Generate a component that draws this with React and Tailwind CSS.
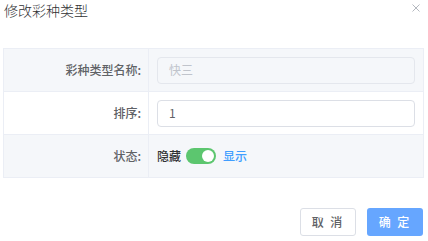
export default function App() {
  const font = { fontFamily: '"Helvetica Neue", "Noto Sans CJK SC", "Liberation Sans", sans-serif' };
  return (
    <div className="w-[428px] h-[241px] bg-white relative overflow-hidden" style={font}>
      <div className="flex items-start justify-between pl-[4px] pr-[8px] pt-[0px] h-[48px]">
        <div className="text-[14px] leading-[20px] text-[#303133] font-light">修改彩种类型</div>
        <svg className="mt-[4px]" width="8" height="8" viewBox="0 0 8 8">
          <path d="M0.5 0.5 L7.5 7.5 M7.5 0.5 L0.5 7.5" stroke="#b4b8bf" strokeWidth="1" />
        </svg>
      </div>
      <div className="mx-[3px] w-[421px] border border-[#ebeef5] text-[12px]">
        <div className="flex h-[43px] bg-[#f5f7fa] border-b border-[#ebeef5]">
          <div className="w-[145px] border-r border-[#ebeef5] flex items-center justify-end pr-[7px] text-[#606266] font-medium">彩种类型名称:</div>
          <div className="flex-1 flex items-center pl-[8px] pr-[8px]">
            <div className="w-full h-[27px] rounded-[4px] border border-[#e4e7ed] bg-[#f5f7fa] flex items-center pl-[11px] text-[#c0c4cc]">快三</div>
          </div>
        </div>
        <div className="flex h-[43px] bg-white border-b border-[#ebeef5]">
          <div className="w-[145px] border-r border-[#ebeef5] flex items-center justify-end pr-[7px] text-[#606266] font-medium">排序:</div>
          <div className="flex-1 flex items-center pl-[8px] pr-[8px]">
            <div className="w-full h-[27px] rounded-[4px] border border-[#dcdfe6] bg-white flex items-center pl-[11px] text-[#606266]">1</div>
          </div>
        </div>
        <div className="flex h-[42px] bg-[#f5f7fa]">
          <div className="w-[145px] border-r border-[#ebeef5] flex items-center justify-end pr-[7px] text-[#606266] font-medium">状态:</div>
          <div className="flex-1 flex items-center pl-[8px]">
            <span className="text-[#303133] font-medium">隐藏</span>
            <div className="ml-[5px] w-[30px] h-[16px] rounded-full bg-[#5cc66f] relative">
              <div className="absolute right-[2px] top-[2px] w-[12px] h-[12px] rounded-full bg-white"></div>
            </div>
            <span className="ml-[7px] text-[#409eff] font-medium">显示</span>
          </div>
        </div>
      </div>
      <div className="flex justify-end gap-[11px] pr-[5px] mt-[30px]">
        <button className="w-[56px] h-[28px] rounded-[3px] border border-[#dcdfe6] bg-white text-[12px] text-[#606266] font-medium tracking-[2px]">取 消</button>
        <button className="w-[56px] h-[28px] rounded-[3px] bg-[#66a6ff] text-[12px] text-white font-medium tracking-[2px]">确 定</button>
      </div>
    </div>
  );
}
